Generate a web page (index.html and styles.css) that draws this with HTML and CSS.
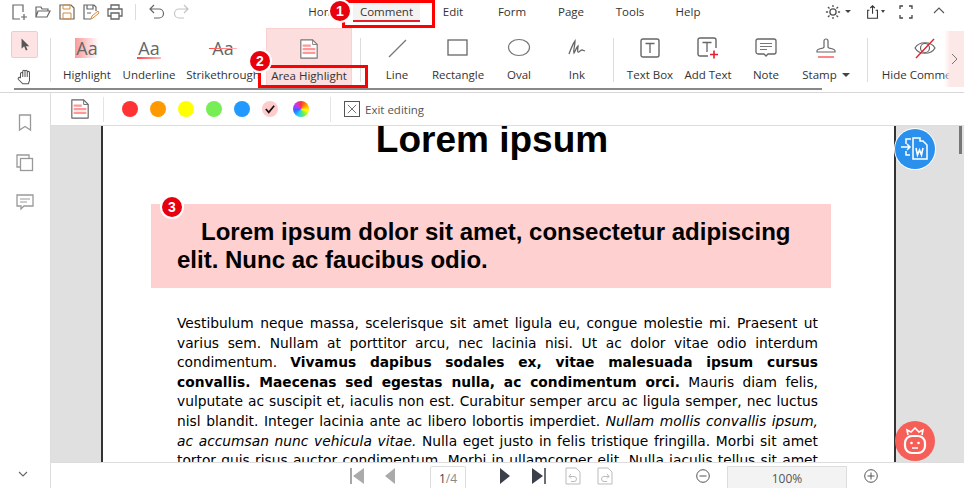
FILE: index.html
```html
<!DOCTYPE html>
<html lang="en">
<head>
    <meta charset="UTF-8">
    <title>Comment - Area Highlight</title>
    <link rel="stylesheet" href="styles.css">
</head>
<body>
<div class="app">

    <!-- menu bar -->
    <header class="topbar">
        <div class="quick">
            <svg class="q" viewBox="0 0 18 18"><path d="M13 9V2H3v14h7M11 14h6M14 11v6" fill="none" stroke="#666" stroke-width="1.2"/></svg>
            <svg class="q" viewBox="0 0 18 18"><path d="M2 14V4h5l1 2h6v2M2 14l2-6h12l-3 6z" fill="none" stroke="#666" stroke-width="1.2"/></svg>
            <svg class="q" viewBox="0 0 18 18"><path d="M2 2h11l3 3v11H2z" fill="none" stroke="#666" stroke-width="1.2"/><path d="M5 2h7v4H5z" fill="none" stroke="#d98a3a"/><path d="M5 10h8v6H5z" fill="none" stroke="#d98a3a"/></svg>
            <svg class="q" viewBox="0 0 18 18"><path d="M9 16H2V2h10l2 2v4M5 2v4h6V2M5 10h4" fill="none" stroke="#666" stroke-width="1.2"/><path d="M9 16l1-3 6-5 1 2-6 5z" fill="none" stroke="#d98a3a"/></svg>
            <svg class="q" viewBox="0 0 18 18"><path d="M5 6V2h8v4M5 13H2V6h14v7h-3M5 10h8v6H5z" fill="none" stroke="#666" stroke-width="1.3"/></svg>
            <span class="q-sep"></span>
            <svg class="q" viewBox="0 0 18 18"><path d="M6 2L2 6l4 4M2 6h9a4 4 0 0 1 0 9H6" fill="none" stroke="#666" stroke-width="1.2"/></svg>
            <svg class="q" viewBox="0 0 18 18"><path d="M12 2l4 4-4 4M16 6H7a4 4 0 0 0 0 9h5" fill="none" stroke="#c4c4c4" stroke-width="1.2"/></svg>
        </div>
        <nav class="menu">
            <a class="m-home">Home</a>
            <a class="m-comment active">Comment</a>
            <a class="m-edit">Edit</a>
            <a class="m-form">Form</a>
            <a class="m-page">Page</a>
            <a class="m-tools">Tools</a>
            <a class="m-help">Help</a>
        </nav>
        <div class="top-right">
            <svg class="tr sun" viewBox="0 0 18 18"><circle cx="9" cy="9" r="3.5" fill="none" stroke="#555" stroke-width="1.5"/><path d="M9 1v2.500M9 14.500V17M1 9h2.500M14.500 9H17M3.300 3.300l1.800 1.800M12.900 12.900l1.800 1.800M3.300 14.700l1.800-1.800M12.900 5.100l1.800-1.800" stroke="#555" stroke-width="1.5"/></svg>
            <span class="caret"></span>
            <svg class="tr share" viewBox="0 0 18 18"><path d="M5 7H3v9h11V7h-2M8.500 11V2M6 4.500L8.500 2 11 4.500" fill="none" stroke="#333" stroke-width="1.200"/></svg>
            <span class="caret small"></span>
            <svg class="tr full" viewBox="0 0 14 14"><path d="M1 4V1h3M10 1h3v3M13 10v3h-3M4 13H1v-3" fill="none" stroke="#444" stroke-width="1.300"/></svg>
            <svg class="tr collapse" viewBox="0 0 14 14"><path d="M2 9l5-5 5 5" fill="none" stroke="#555" stroke-width="1.100"/></svg>
        </div>
    </header>

    <!-- ribbon -->
    <section class="ribbon">
        <div class="pointer-tools">
            <span class="pt on"><svg viewBox="0 0 14 16" width="12" height="15"><path d="M3 1v12l3-3 2 5 2-1-2-4h4z" fill="#555"/></svg></span>
            <span class="pt"><svg viewBox="0 0 16 16" width="18" height="18"><path d="M4 9V5a1 1 0 0 1 2 0V3a1 1 0 0 1 2 0v0a1 1 0 0 1 2 0v1a1 1 0 0 1 2 0v7l-1 3H6L2 10a1 1 0 0 1 2-1zM6 5v3M8 3v5M10 4v4" fill="#fff" stroke="#555" stroke-width="0.9"/></svg></span>
        </div>
        <span class="rb-sep first"></span>
        <div class="tool w-hl">
            <span class="ic aa hl-bg">Aa</span><span class="tl">Highlight</span>
        </div>
        <div class="tool w-ul">
            <span class="ic aa ul-line">Aa</span><span class="tl">Underline</span>
        </div>
        <div class="tool w-st">
            <span class="ic aa st-line">Aa</span><span class="tl">Strikethrough</span>
        </div>
        <div class="tool w-area selected">
            <span class="ic">
                <svg viewBox="0 0 22 24" width="20" height="22"><path d="M2 2h13l5 5v15H2z" fill="#fff" stroke="#777" stroke-width="1.300" stroke-linejoin="round"/><path d="M15 2v5h5" fill="none" stroke="#777"/><path d="M4 7h9v2.500H4zM4 11h14v2.500H4zM4 15h14v2.500H4z" fill="#f99"/></svg>
            </span>
            <span class="tl">Area Highlight</span>
        </div>
        <span class="rb-sep area-sep"></span>
        <div class="tool w-line">
            <span class="ic"><svg viewBox="0 0 22 22" width="22" height="22"><path d="M3 20L20 3" stroke="#777" stroke-width="1.200"/></svg></span><span class="tl">Line</span>
        </div>
        <div class="tool w-rect">
            <span class="ic"><svg viewBox="0 0 22 20" width="22" height="20"><rect x="1" y="2" width="19" height="15" fill="none" stroke="#666" stroke-width="1.300"/></svg></span><span class="tl">Rectangle</span>
        </div>
        <div class="tool w-oval">
            <span class="ic"><svg viewBox="0 0 24 20" width="24" height="20"><ellipse cx="12" cy="9.500" rx="10.500" ry="8" fill="none" stroke="#777" stroke-width="1.200"/></svg></span><span class="tl">Oval</span>
        </div>
        <div class="tool w-ink">
            <span class="ic"><svg viewBox="0 0 18 18" width="18" height="18"><path d="M1 15C3 10 4 6 7 2c0 5-2 9-1 12 2-3 2-5 4-7 0 3-1 5 0 6s2-2 4-2l3 1" fill="none" stroke="#666" stroke-width="1.300"/></svg></span><span class="tl">Ink</span>
        </div>
        <span class="rb-sep ink-sep"></span>
        <div class="tool w-box">
            <span class="ic"><svg viewBox="0 0 20 20" width="20" height="20"><rect x="1" y="1" width="18" height="18" rx="2" fill="none" stroke="#666" stroke-width="1.400"/><path d="M5.500 5.500h9M10 5.500V15" stroke="#666" stroke-width="1.300"/></svg></span><span class="tl">Text Box</span>
        </div>
        <div class="tool w-add">
            <span class="ic"><svg viewBox="0 0 22 22" width="22" height="22"><path d="M11 19H3a2 2 0 0 1-2-2V3a2 2 0 0 1 2-2h14a2 2 0 0 1 2 2v8" fill="none" stroke="#666" stroke-width="1.400"/><path d="M5.500 5.500h9M10 5.500V15" stroke="#666" stroke-width="1.300"/><path d="M13 17.500h8M17 13.500v8" stroke="#e4202c" stroke-width="1.600"/></svg></span><span class="tl">Add Text</span>
        </div>
        <div class="tool w-note">
            <span class="ic"><svg viewBox="0 0 22 20" width="22" height="20"><path d="M3 1h16a2 2 0 0 1 2 2v11a2 2 0 0 1-2 2h-6l-2 2-2-2H3a2 2 0 0 1-2-2V3a2 2 0 0 1 2-2z" fill="none" stroke="#666" stroke-width="1.300"/><path d="M5 5.500h12M5 8.500h12M5 11.500h7" stroke="#777"/></svg></span><span class="tl">Note</span>
        </div>
        <div class="tool w-stamp">
            <span class="ic"><svg viewBox="0 0 20 22" width="20" height="22"><path d="M8 10V4a2 2 0 0 1 4 0v6c0 2 7 1 7 4v1H1v-1c0-3 7-2 7-4z" fill="none" stroke="#666" stroke-width="1.200"/><path d="M2 20h16" stroke="#f44" stroke-width="1.300"/></svg></span><span class="tl">Stamp <i class="caret"></i></span>
        </div>
        <span class="rb-sep stamp-sep"></span>
        <div class="tool w-hide">
            <span class="ic"><svg viewBox="0 0 22 22" width="22" height="22"><path d="M1 11c4-7 16-7 20 0-4 7-16 7-20 0z" fill="none" stroke="#666" stroke-width="1.200"/><circle cx="11" cy="11" r="4.500" fill="none" stroke="#666" stroke-width="1.200"/><path d="M2 21L20 2" stroke="#e4202c" stroke-width="1.400"/></svg></span><span class="tl">Hide Comments</span>
        </div>
        <div class="ribbon-next"><svg viewBox="0 0 8 12" width="8" height="12"><path d="M1 1l5 5-5 5" fill="none" stroke="#777"/></svg></div>
        <div class="ribbon-scroll"></div>
    </section>

    <div class="workspace">
        <!-- left panel -->
        <aside class="side">
            <svg viewBox="0 0 14 18" width="14" height="18"><path d="M1.500 1h11v15L7 12.500 1.500 16z" fill="none" stroke="#999" stroke-width="1.300"/></svg>
            <svg viewBox="0 0 18 18" width="18" height="18"><path d="M4 13H1V1h12v3" fill="none" stroke="#999" stroke-width="1.300"/><rect x="4.500" y="4.500" width="12" height="12" fill="none" stroke="#999" stroke-width="1.300"/></svg>
            <svg viewBox="0 0 18 18" width="18" height="18"><path d="M1 1h16v11h-9l-3 3v-3H1z" fill="none" stroke="#999" stroke-width="1.300"/><path d="M4 5h10M4 8h7" stroke="#999"/></svg>
            <svg class="side-down" viewBox="0 0 12 8" width="12" height="8"><path d="M2 2l4 4 4-4" fill="none" stroke="#666" stroke-width="1.100"/></svg>
        </aside>

        <div class="center">
            <!-- colour bar -->
            <div class="subbar">
                <span class="sub-icon">
                    <svg viewBox="0 0 22 24" width="20" height="22"><path d="M2 2h13l5 5v15H2z" fill="#fff" stroke="#666" stroke-width="1.300" stroke-linejoin="round"/><path d="M15 2v5h5" fill="none" stroke="#666"/><path d="M4 7h9v2.500H4zM4 11h14v2.500H4zM4 15h14v2.500H4z" fill="#f99"/></svg>
                </span>
                <span class="sub-sep"></span>
                <span class="dot c1"></span>
                <span class="dot c2"></span>
                <span class="dot c3"></span>
                <span class="dot c4"></span>
                <span class="dot c5"></span>
                <span class="dot c6"><svg viewBox="0 0 14 12" width="12" height="10"><path d="M2 6l3.500 4L12 2" fill="none" stroke="#111" stroke-width="2"/></svg></span>
                <span class="dot c7"></span>
                <span class="sub-sep second"></span>
                <span class="exit-box"><svg viewBox="0 0 12 12" width="12" height="12"><path d="M1 1l10 10M11 1L1 11" stroke="#555"/></svg></span>
                <span class="exit-label">Exit editing</span>
            </div>

            <!-- document -->
            <main class="viewer">
                <article class="page">
                    <h1>Lorem ipsum</h1>
                    <div class="marked">
                        <h2>Lorem ipsum dolor sit amet, consectetur adipiscing elit. Nunc ac faucibus odio.</h2>
                    </div>
                    <p>Vestibulum neque massa, scelerisque sit amet ligula eu, congue molestie mi. Praesent ut varius sem. Nullam at porttitor arcu, nec lacinia nisi. Ut ac dolor vitae odio interdum condimentum. <b>Vivamus dapibus sodales ex, vitae malesuada ipsum cursus convallis. Maecenas sed egestas nulla, ac condimentum orci.</b> Mauris diam felis, vulputate ac suscipit et, iaculis non est. Curabitur semper arcu ac ligula semper, nec luctus nisl blandit. Integer lacinia ante ac libero lobortis imperdiet. <i>Nullam mollis convallis ipsum, ac accumsan nunc vehicula vitae.</i> Nulla eget justo in felis tristique fringilla. Morbi sit amet tortor quis risus auctor condimentum. Morbi in ullamcorper elit. Nulla iaculis tellus sit amet mauris tempus fringilla.</p>
                </article>
                <div class="v-scroll"></div>
            </main>

            <!-- page nav and zoom -->
            <footer class="statusbar">
                <svg class="nav first" viewBox="0 0 16 18" width="16" height="18"><path d="M2 1v16" stroke="#888" stroke-width="1.500"/><path d="M15 1v16L4 9z" fill="#aaa"/></svg>
                <svg class="nav prev" viewBox="0 0 12 18" width="12" height="18"><path d="M11 1v16L1 9z" fill="#aaa"/></svg>
                <span class="page-box"><b>1</b>/4</span>
                <svg class="nav next" viewBox="0 0 12 18" width="12" height="18"><path d="M1 1v16l10-8z" fill="#3a3f4a"/></svg>
                <svg class="nav last" viewBox="0 0 16 18" width="16" height="18"><path d="M1 1v16l11-8z" fill="#3a3f4a"/><path d="M14 1v16" stroke="#3a3f4a" stroke-width="1.500"/></svg>
                <svg class="nav back" viewBox="0 0 16 18" width="16" height="18"><path d="M1 1h10l4 4v12H1z" fill="none" stroke="#bbb"/><path d="M6 7L4 9.500l2 2M4 9.500h5a2 2 0 0 1 0 5H6" fill="none" stroke="#bbb"/></svg>
                <svg class="nav fwd" viewBox="0 0 16 18" width="16" height="18"><path d="M1 1h10l4 4v12H1z" fill="none" stroke="#bbb"/><path d="M10 7l2 2.500-2 2M12 9.500H7a2 2 0 0 0 0 5h3" fill="none" stroke="#bbb"/></svg>
                <svg class="nav minus" viewBox="0 0 14 14" width="14" height="14"><circle cx="7" cy="7" r="6.300" fill="none" stroke="#555"/><path d="M3.500 7h7" stroke="#555"/></svg>
                <span class="zoom-box">100%</span>
                <svg class="nav plus" viewBox="0 0 14 14" width="14" height="14"><circle cx="7" cy="7" r="6.300" fill="none" stroke="#555"/><path d="M3.500 7h7M7 3.500v7" stroke="#555"/></svg>
            </footer>
        </div>
    </div>

    <!-- floating buttons -->
    <div class="float-btn to-word">
        <svg viewBox="0 0 30 30" width="30" height="30"><path d="M11 5H6v5M6 17v4h4M1 13h9M7 10l3 3-3 3" fill="none" stroke="#fff" stroke-width="1.500"/><path d="M13 4h7v3h3l4 4v14H13z" fill="none" stroke="#fff" stroke-width="1.500"/><path d="M16 14l1.500 7 2-5 2 5 1.500-7" fill="none" stroke="#fff" stroke-width="1.600"/></svg>
    </div>
    <div class="float-btn robot">
        <svg viewBox="0 0 26 28" width="26" height="28"><path d="M6 8L5 3l4 2 4-4 4 4 4-2-1 5" fill="none" stroke="#fff" stroke-width="1.600"/><rect x="3" y="9" width="20" height="17" rx="7" fill="none" stroke="#fff" stroke-width="2.200"/><circle cx="9.500" cy="16" r="1.300" fill="#fff"/><circle cx="16.500" cy="16" r="1.300" fill="#fff"/><path d="M10 21h6" stroke="#fff" stroke-width="1.500"/></svg>
    </div>

    <!-- tutorial marks drawn over the window -->
    <div class="mark-box box-tab"></div>
    <div class="mark-box box-area"></div>
    <span class="step s1">1</span>
    <span class="step s2">2</span>
    <span class="step s3">3</span>
</div>
</body>
</html>
```

FILE: styles.css
```css
* {
    box-sizing: border-box;
}

html, body {
    margin: 0;
    height: 100%;
    overflow: hidden;
}

body {
    font-family: "Open Sans", "Noto Sans", sans-serif;
    font-size: 11.5px;
    color: #333;
    background-color: #fff;
}

.app {
    position: relative;
    width: 964px;
    height: 488px;
    display: flex;
    flex-direction: column;
    overflow: hidden;
}

/* menu bar */
.topbar {
    height: 27px;
    display: flex;
    flex-shrink: 0;
}

.quick {
    width: 296px;
    padding: 3px 0 0 10px;
    display: flex;
    align-items: flex-start;
    gap: 6px;
}

.q {
    width: 18px;
    height: 18px;
    flex-shrink: 0;
}

.q-sep {
    width: 1px;
    height: 16px;
    margin: 1px 6px 0 5px;
    background-color: #ddd;
}

.menu {
    width: 430px;
    display: flex;
    align-items: flex-start;
}

.menu a {
    height: 22px;
    line-height: 24px;
    text-align: center;
    color: #333;
}

.m-home { width: 57px; }
.m-comment { width: 67px; background-color: #f3f3f3; border-bottom: 2px solid #e4202c; }
.m-edit { width: 60px; margin-left: 3px; }
.m-form { width: 58px; }
.m-page { width: 60px; }
.m-tools { width: 58px; }
.m-help { width: 58px; }

.top-right {
    flex: 1;
    display: flex;
    align-items: flex-start;
    padding: 4px 0 0 99px;
}

.tr {
    flex-shrink: 0;
}

.sun { width: 16px; height: 16px; }
.share { width: 16px; height: 16px; margin-left: 14px; }
.full { width: 14px; height: 14px; margin-left: 14px; margin-top: 1px; }
.collapse { width: 14px; height: 14px; margin-left: 19px; }

.caret {
    display: inline-block;
    width: 0;
    height: 0;
    margin: 6px 0 0 4px;
    border-left: 3px solid transparent;
    border-right: 3px solid transparent;
    border-top: 3px solid #444;
}

.caret.small {
    margin-left: 0;
    border-left-width: 2px;
    border-right-width: 2px;
}

/* ribbon */
.ribbon {
    position: relative;
    height: 66px;
    flex-shrink: 0;
    display: flex;
    padding-top: 1px;
    border-bottom: 1px solid #d8d8d8;
}

.pointer-tools {
    width: 50px;
    flex-shrink: 0;
    padding: 3px 0 0 11px;
    display: flex;
    flex-direction: column;
    gap: 5px;
}

.pt {
    width: 27px;
    height: 27px;
    display: flex;
    align-items: center;
    justify-content: center;
    border: 1px solid transparent;
    border-radius: 2px;
}

.pt.on {
    background-color: #fde3e3;
    border-color: #f8c8c8;
}

.rb-sep {
    width: 1px;
    height: 44px;
    margin-top: 10px;
    flex-shrink: 0;
    background-color: #ddd;
}

.rb-sep.first { margin-right: 5px; }
.rb-sep.area-sep { margin: 10px 11px 0 8px; }
.rb-sep.ink-sep { margin: 10px 3px 0 3px; }
.rb-sep.stamp-sep { margin: 10px 12px 0 14px; }

.tool {
    flex-shrink: 0;
    height: 60px;
    padding-top: 6px;
    display: flex;
    flex-direction: column;
    align-items: center;
    white-space: nowrap;
}

.w-hl { width: 62px; }
.w-ul { width: 62px; }
.w-st { width: 86px; }
.w-area { width: 86px; height: 61px; }
.w-line { width: 50px; }
.w-rect { width: 72px; }
.w-oval { width: 50px; }
.w-ink { width: 66px; }
.w-box { width: 66px; }
.w-add { width: 50px; }
.w-note { width: 66px; }
.w-stamp { width: 54px; }
.w-hide { width: 90px; }

.tool.selected {
    background-color: #fddede;
    border: 1px solid #fbd0d0;
    border-bottom: none;
}

.ic {
    height: 28px;
    margin-bottom: 4px;
    display: flex;
    align-items: center;
    justify-content: center;
}

.tl {
    line-height: 18px;
    color: #333;
}

.tl .caret {
    margin: 0 0 2px 2px;
    vertical-align: middle;
    border-left-width: 4px;
    border-right-width: 4px;
    border-top-width: 4px;
}

.aa {
    position: relative;
    width: 24px;
    font-size: 18px;
    color: #666;
}

.hl-bg {
    background: linear-gradient(90deg, #fa9a9a, #fff);
    background-size: 100% 20px;
    background-repeat: no-repeat;
    background-position: center;
}

.ul-line::after, .st-line::after {
    content: "";
    position: absolute;
    left: 0;
    right: 0;
    height: 2px;
    background: linear-gradient(90deg, #f44, #fbb);
}

.ul-line::after { bottom: 3px; }
.st-line::after { top: 14px; height: 1px; left: -2px; right: -2px; }

.ribbon-next {
    position: absolute;
    right: 0;
    top: 4px;
    width: 20px;
    height: 56px;
    display: flex;
    align-items: center;
    justify-content: flex-end;
    padding-right: 5px;
    background: linear-gradient(90deg, rgba(253, 232, 232, 0), #fde8e8 6px);
}

.ribbon-scroll {
    position: absolute;
    left: 14px;
    bottom: 2px;
    width: 808px;
    height: 2px;
    background-color: #888;
}

/* body */
.workspace {
    flex: 1;
    display: flex;
    min-height: 0;
}

.side {
    position: relative;
    width: 51px;
    flex-shrink: 0;
    padding-top: 21px;
    display: flex;
    flex-direction: column;
    align-items: center;
    gap: 22px;
    padding-right: 1px;
    border-right: 1px solid #ddd;
}

.side-down {
    position: absolute;
    left: 17px;
    bottom: 10px;
}

.center {
    flex: 1;
    min-width: 0;
    display: flex;
    flex-direction: column;
}

.subbar {
    height: 33px;
    flex-shrink: 0;
    display: flex;
    align-items: center;
    padding-left: 19px;
    border-bottom: 1px solid #ddd;
}

.sub-icon {
    width: 20px;
    height: 22px;
}

.sub-sep {
    width: 1px;
    height: 25px;
    margin: 0 18px 0 13px;
    background-color: #e4e4e4;
}

.sub-sep.second {
    margin: 0 13px 0 21px;
}

.dot {
    width: 16px;
    height: 16px;
    margin-right: 12px;
    border-radius: 50%;
    flex-shrink: 0;
    display: flex;
    align-items: center;
    justify-content: center;
}

.c1 { background-color: #f33; }
.c2 { background-color: #f90; }
.c3 { background-color: #ff0; }
.c4 { background-color: #7e5; }
.c5 { background-color: #29f; }
.c6 { background-color: #fcc; margin-right: 15px; }
.c7 {
    margin-right: 0;
    background: conic-gradient(#f33, #f90, #ff0, #6e5, #2cf, #36f, #c3f, #f33);
}

.exit-box {
    width: 16px;
    height: 16px;
    border: 1px solid #555;
    display: flex;
    align-items: center;
    justify-content: center;
}

.exit-box svg {
    width: 10px;
    height: 10px;
}

.exit-label {
    margin-left: 5px;
    color: #555;
}

/* document */
.viewer {
    position: relative;
    flex: 1;
    min-height: 0;
    overflow: hidden;
    padding-left: 50px;
    background-color: #e0e0e0;
}

.page {
    width: 795px;
    height: 100%;
    padding: 0 76px 0 74px;
    overflow: hidden;
    color: #000;
    background-color: #fff;
    border-left: 2px solid #333;
    border-right: 2px solid #333;
}

.page h1 {
    margin: 1px 11px 0 0;
    text-align: center;
    font-family: "Liberation Sans", Arial, sans-serif;
    font-size: 37px;
    line-height: 26px;
}

.marked {
    width: 680px;
    height: 84px;
    margin: 51px 0 27px -26px;
    padding: 14px 26px 0;
    background-color: #ffd0d0;
}

.marked h2 {
    margin: 0;
    text-indent: 24px;
    font-family: "Liberation Sans", Arial, sans-serif;
    font-size: 24px;
    line-height: 28px;
}

.page p {
    margin: -1px 0 0;
    width: 641px;
    text-align: justify;
    font-family: "DejaVu Sans", sans-serif;
    font-size: 13.8px;
    line-height: 19.6px;
}

.v-scroll {
    position: absolute;
    right: 2px;
    top: 0;
    width: 3px;
    height: 28px;
    background-color: #777;
}

/* status bar */
.statusbar {
    height: 26px;
    flex-shrink: 0;
    display: flex;
    align-items: center;
    border-top: 1px solid #ddd;
}

.nav {
    flex-shrink: 0;
}

.nav.first { margin-left: 298px; }
.nav.prev { margin-left: 19px; }
.nav.next { margin-left: 33px; }
.nav.last { margin-left: 20px; }
.nav.back { margin-left: 18px; }
.nav.fwd { margin-left: 16px; }
.nav.minus { margin-left: 83px; }
.nav.plus { margin-left: 17px; }

.page-box {
    width: 36px;
    height: 22px;
    margin: 3px 0 0 34px;
    line-height: 23px;
    text-align: center;
    font-size: 12px;
    color: #888;
    border: 1px solid #ddd;
    border-bottom: none;
    border-radius: 2px 2px 0 0;
}

.page-box b {
    font-weight: 400;
    color: #444;
}

.zoom-box {
    width: 120px;
    height: 22px;
    margin: 3px 0 0 17px;
    line-height: 23px;
    text-align: center;
    font-size: 12px;
    color: #555;
    background-color: #f3f3f3;
    border: 1px solid #ddd;
    border-bottom: none;
}

/* floating buttons */
.float-btn {
    position: absolute;
    width: 40px;
    height: 40px;
    border-radius: 50%;
    display: flex;
    align-items: center;
    justify-content: center;
}

.to-word {
    left: 895px;
    top: 129px;
    background-color: #2a90ee;
    box-shadow: 0 0 0 1px #fff;
}

.robot {
    left: 895px;
    top: 421px;
    background-color: #f55f58;
}

/* tutorial marks */
.mark-box {
    position: absolute;
    border: 3px solid #f00;
}

.box-tab {
    left: 342px;
    top: 0;
    width: 93px;
    height: 28px;
}

.box-area {
    left: 258px;
    top: 65px;
    width: 110px;
    height: 23px;
}

.step {
    position: absolute;
    width: 20px;
    height: 20px;
    border-radius: 50%;
    text-align: center;
    line-height: 20px;
    font-family: "Liberation Sans", Arial, sans-serif;
    font-size: 14px;
    font-weight: 700;
    color: #fff;
    background-color: #e8000d;
    box-shadow: 0 0 0 2px #fff;
}

.s1 { left: 330px; top: 1px; }
.s2 { left: 250px; top: 51px; }
.s3 { left: 162px; top: 197px; }
```
